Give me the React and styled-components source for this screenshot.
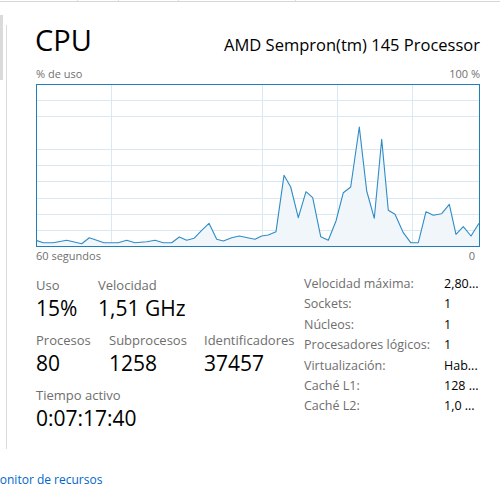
import React from "react";
import styled, { createGlobalStyle } from "styled-components";

const GlobalStyle = createGlobalStyle`
  body {
    margin: 0;
    background: #ffffff;
    font-family: "Open Sans", "Noto Sans", sans-serif;
  }
`;

const Page = styled.div`
  width: 500px;
  height: 500px;
  overflow: hidden;
  background: #fff;
  display: flex;
  flex-direction: column;
`;

const TopStrip = styled.div`
  display: flex;
  height: 1px;
  border-bottom: 1px solid #d6d6d6;
`;

const TopCell = styled.div`
  width: ${(p) => p.w}px;
  border-right: 1px solid #dedede;
`;

const Main = styled.div`
  display: flex;
  height: 447px;
`;

const Gutter = styled.div`
  width: 6px;
  flex-shrink: 0;
`;

const ScrollThumb = styled.div`
  width: 3px;
  height: 65px;
  margin-top: 13px;
  background: #dadada;
`;

const Panel = styled.div`
  margin-top: 23px;
  flex: 1;
  border-left: 1px solid #dcdcdc;
  padding: 0 20px 0 29px;
  display: flex;
  flex-direction: column;
`;

const Header = styled.div`
  display: flex;
  justify-content: space-between;
  align-items: baseline;
`;

const Title = styled.div`
  font-size: 29px;
  line-height: 30px;
  color: #000;
  margin-left: -1px;
`;

const Model = styled.div`
  font-size: 16.5px;
  color: #000;
`;

const AxisRow = styled.div`
  display: flex;
  justify-content: space-between;
  font-size: 11px;
  line-height: 14px;
  color: #707070;
  margin-top: ${(p) => p.mt}px;
`;

const Chart = styled.svg`
  display: block;
  margin-top: 3px;
`;

const Stats = styled.div`
  display: flex;
  margin-top: 11px;
`;

const LeftStats = styled.div`
  width: 268px;
  padding-top: 3px;
  display: flex;
  flex-direction: column;
  gap: 11px;
`;

const StatRow = styled.div`
  display: flex;
`;

const Stat = styled.div`
  width: ${(p) => (p.w ? `${p.w}px` : "auto")};
  display: flex;
  flex-direction: column;
`;

const StatLabel = styled.div`
  font-size: 13px;
  line-height: 16px;
  color: #6e6e6e;
  white-space: nowrap;
`;

const StatValue = styled.div`
  font-size: 21px;
  line-height: 26px;
  margin-top: 2px;
  color: #000;
`;

const InfoList = styled.div`
  display: flex;
  flex-direction: column;
`;

const InfoRow = styled.div`
  display: flex;
  font-size: 12.5px;
  line-height: 20.4px;
`;

const InfoLabel = styled.div`
  width: 140px;
  color: #6e6e6e;
  white-space: nowrap;
`;

const InfoValue = styled.div`
  color: #000;
  white-space: nowrap;
`;

const Footer = styled.div`
  padding-top: 23px;
  font-size: 12px;
  line-height: 16px;
`;

const Link = styled.a`
  color: #0066cc;
  text-decoration: none;
  margin-left: -11px;
`;

const points = [
  [0, 156.3], [7.3, 158.7], [17.3, 158.7], [30.7, 156.3], [45.7, 159.7],
  [53.3, 153.7], [60.7, 156.3], [68, 158.7], [82.3, 158.7], [90.7, 156.3],
  [99, 158.7], [110.7, 157.7], [119, 156.3], [127.3, 158.7], [135.7, 158.7],
  [143.3, 153], [150.7, 156.3], [158, 154.3], [165.7, 146.3], [173, 139.3],
  [180.7, 155.3], [187.3, 157], [195.7, 153.7], [203.3, 152], [214, 154.3],
  [219, 155.3], [225.7, 152], [232.3, 151], [240, 147.7], [248, 91.3],
  [254.7, 103], [262.3, 133.7], [270, 107.7], [276.7, 113.7], [284.7, 152.7],
  [292.3, 156.3], [300, 137], [307.3, 108.7], [314.7, 103], [323.3, 43],
  [330.7, 107], [338.3, 134.3], [345.7, 55.3], [352.3, 126.3], [359, 130.3],
  [367.3, 148.7], [374.7, 158.7], [382.3, 158.7], [390, 127.7], [397.3, 131.3],
  [405.7, 129.7], [413.3, 120.3], [420, 150.3], [427.3, 142.7], [435, 152],
  [443, 139.3],
];

const hLines = [16, 32, 65, 81, 97, 114, 130, 146];
const vLines = [75, 226, 301, 376];

function CpuChart() {
  const line = points.map((p) => p.join(",")).join(" ");
  const area = `0,162 ${line} 443,162`;
  return (
    <Chart width="444" height="163" viewBox="0 0 444 163">
      {hLines.map((y) => (
        <line key={y} x1="1" x2="443" y1={y + 0.5} y2={y + 0.5} stroke="#d9e8f2" strokeWidth="1" />
      ))}
      {vLines.map((x) => (
        <line key={x} x1={x + 0.5} x2={x + 0.5} y1="1" y2="162" stroke="#d9e8f2" strokeWidth="1" />
      ))}
      <polygon points={area} fill="#f1f6fa" />
      <polyline points={line} fill="none" stroke="#2f8cc6" strokeWidth="1.1" strokeLinejoin="round" />
      <rect x="0.5" y="0.5" width="443" height="162" fill="none" stroke="#1f7fbb" strokeWidth="1" />
    </Chart>
  );
}

// values are shown cut short, as in the narrow column of the original
const info = [
  ["Velocidad máxima:", "2,80..."],
  ["Sockets:", "1"],
  ["Núcleos:", "1"],
  ["Procesadores lógicos:", "1"],
  ["Virtualización:", "Hab..."],
  ["Caché L1:", "128 ..."],
  ["Caché L2:", "1,0 ..."],
];

export default function App() {
  return (
    <>
      <GlobalStyle />
      <Page>
        <TopStrip>
          <TopCell w={77} />
          <TopCell w={40} />
          <TopCell w={59} />
          <TopCell w={116} />
        </TopStrip>
        <Main>
          <Gutter>
            <ScrollThumb />
          </Gutter>
          <Panel>
            <Header>
              <Title>CPU</Title>
              <Model>AMD Sempron(tm) 145 Processor</Model>
            </Header>
            <AxisRow mt={11}>
              <span>% de uso</span>
              <span>100 %</span>
            </AxisRow>
            <CpuChart />
            <AxisRow mt={2}>
              <span>60 segundos</span>
              <span style={{ marginRight: 5 }}>0</span>
            </AxisRow>
            <Stats>
              <LeftStats>
                <StatRow>
                  <Stat w={62}>
                    <StatLabel>Uso</StatLabel>
                    <StatValue>15%</StatValue>
                  </Stat>
                  <Stat>
                    <StatLabel>Velocidad</StatLabel>
                    <StatValue>1,51 GHz</StatValue>
                  </Stat>
                </StatRow>
                <StatRow>
                  <Stat w={73}>
                    <StatLabel>Procesos</StatLabel>
                    <StatValue>80</StatValue>
                  </Stat>
                  <Stat w={95}>
                    <StatLabel>Subprocesos</StatLabel>
                    <StatValue>1258</StatValue>
                  </Stat>
                  <Stat>
                    <StatLabel>Identificadores</StatLabel>
                    <StatValue>37457</StatValue>
                  </Stat>
                </StatRow>
                <StatRow>
                  <Stat>
                    <StatLabel>Tiempo activo</StatLabel>
                    <StatValue>0:07:17:40</StatValue>
                  </Stat>
                </StatRow>
              </LeftStats>
              <InfoList>
                {info.map(([k, v]) => (
                  <InfoRow key={k}>
                    <InfoLabel>{k}</InfoLabel>
                    <InfoValue>{v}</InfoValue>
                  </InfoRow>
                ))}
              </InfoList>
            </Stats>
          </Panel>
        </Main>
        <Footer>
          <Link href="#">Monitor de recursos</Link>
        </Footer>
      </Page>
    </>
  );
}
